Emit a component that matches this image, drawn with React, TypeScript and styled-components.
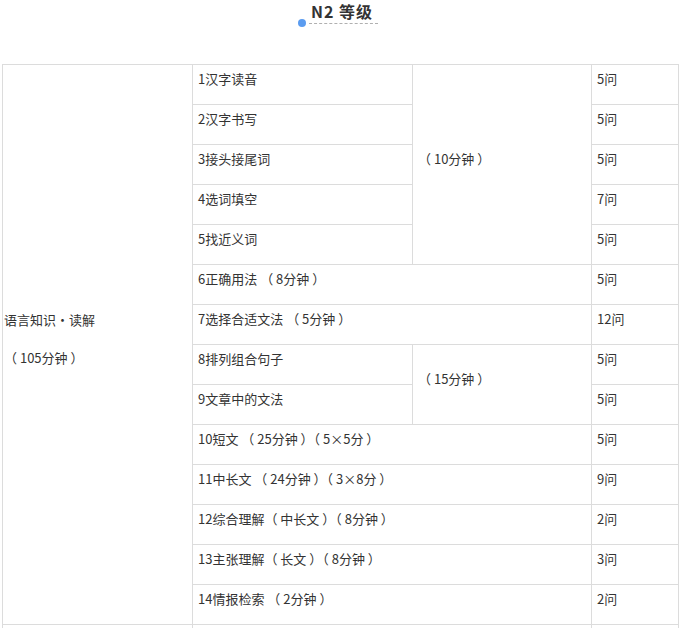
import React from "react";
import styled, { createGlobalStyle } from "styled-components";

const GlobalStyle = createGlobalStyle`
  body {
    margin: 0;
    background: #fff;
    font-family: "Noto Sans CJK SC", "Noto Sans", sans-serif;
    color: #333;
  }
`;

type Row = {
  part?: string;
  count: string;
  full?: boolean;
};

const rows: Row[] = [
  { part: "1汉字读音", count: "5问" },
  { part: "2汉字书写", count: "5问" },
  { part: "3接头接尾词", count: "5问" },
  { part: "4选词填空", count: "7问" },
  { part: "5找近义词", count: "5问" },
  { part: "6正确用法 （ 8分钟 ）", count: "5问", full: true },
  { part: "7选择合适文法 （ 5分钟 ）", count: "12问", full: true },
  { part: "8排列组合句子", count: "5问" },
  { part: "9文章中的文法", count: "5问" },
  { part: "10短文 （ 25分钟 ）（ 5×5分 ）", count: "5问", full: true },
  { part: "11中长文 （ 24分钟 ）（ 3×8分 ）", count: "9问", full: true },
  { part: "12综合理解（ 中长文 ）（ 8分钟 ）", count: "2问", full: true },
  { part: "13主张理解（ 长文 ）（ 8分钟 ）", count: "3问", full: true },
  { part: "14情报检索 （ 2分钟 ）", count: "2问", full: true },
];

// merged time cells in column 3: start row index -> [span, text]
const groups: Record<number, [number, string]> = {
  0: [5, "（ 10分钟 ）"],
  7: [2, "（ 15分钟 ）"],
};

const App = () => {
  return (
    <Page>
      <GlobalStyle />
      <Heading>
        <Title>N2 等级</Title>
        <Divider>
          <Dot />
          <Dash />
        </Divider>
      </Heading>
      <Table>
        <colgroup>
          <col style={{ width: 190 }} />
          <col style={{ width: 220 }} />
          <col style={{ width: 179 }} />
          <col style={{ width: 87 }} />
        </colgroup>
        <tbody>
          {rows.map((r, i) => (
            <tr key={i}>
              {i === 0 && (
                <Cell rowSpan={rows.length} $tight>
                  <Line>语言知识・读解</Line>
                  <Line>（ 105分钟 ）</Line>
                </Cell>
              )}
              <Cell colSpan={r.full ? 2 : 1}>
                <Line>{r.part}</Line>
              </Cell>
              {groups[i] && (
                <Cell rowSpan={groups[i][0]}>
                  <Line>{groups[i][1]}</Line>
                </Cell>
              )}
              <Cell>
                <Line>{r.count}</Line>
              </Cell>
            </tr>
          ))}
          <tr>
            <Cell $tight />
            <Cell colSpan={2} />
            <Cell />
          </tr>
        </tbody>
      </Table>
    </Page>
  );
};

const Page = styled.div`
  width: 682px;
  height: 628px;
  overflow: hidden;
`;

const Heading = styled.div`
  display: flex;
  flex-direction: column;
  align-items: center;
  height: 64px;
`;

const Title = styled.h2`
  margin: 0 0 0 2px;
  font-size: 16px;
  line-height: 22px;
  font-weight: 700;
  letter-spacing: 1px;
  color: #333;
`;

const Divider = styled.div`
  display: flex;
  align-items: center;
  width: 80px;
  margin: -3px 0 0 -6px;
  height: 8px;
`;

const Dot = styled.span`
  width: 8px;
  height: 8px;
  border-radius: 50%;
  background: #5b9cf0;
  flex-shrink: 0;
`;

const Dash = styled.span`
  flex: 1;
  height: 0;
  margin-left: 3px;
  border-top: 1px dashed #b0b0b0;
`;

const Table = styled.table`
  margin-left: 2px;
  width: 677px;
  table-layout: fixed;
  border-collapse: collapse;
  font-size: 13px;
  color: #333;

  tr {
    height: 40px;
  }
`;

const Cell = styled.td<{ $tight?: boolean }>`
  border: 1px solid #dcdcdc;
  padding: 0 ${(p) => (p.$tight ? "0 0 1px" : "5px")};
  vertical-align: middle;
  height: 38px;
`;

const Line = styled.p`
  margin: 0 0 12px;
  line-height: 26px;
  white-space: nowrap;
`;

export default App;
